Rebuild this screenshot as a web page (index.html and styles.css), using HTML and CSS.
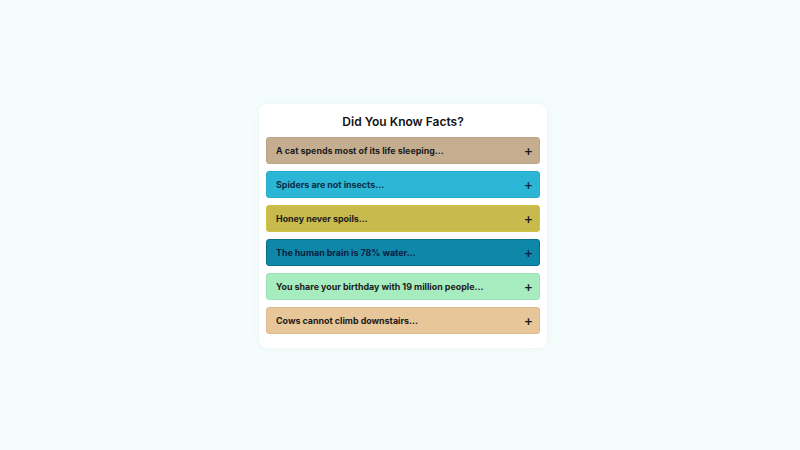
FILE: index.html
```html
<!DOCTYPE html>
<html>
<head>
<meta charset="utf-8">
<link rel="stylesheet" href="styles.css">
</head>
<body>
<main class="page">
  <section class="card">
    <h1 class="title">Did You Know Facts?</h1>
    <div class="list">
      <div class="item c1"><span>A cat spends most of its life sleeping...</span><span class="plus">+</span></div>
      <div class="item c2"><span>Spiders are not insects...</span><span class="plus">+</span></div>
      <div class="item c3"><span>Honey never spoils...</span><span class="plus">+</span></div>
      <div class="item c4"><span>The human brain is 78% water...</span><span class="plus">+</span></div>
      <div class="item c5"><span>You share your birthday with 19 million people...</span><span class="plus">+</span></div>
      <div class="item c6"><span>Cows cannot climb downstairs...</span><span class="plus">+</span></div>
    </div>
  </section>
</main>
</body>
</html>
```
FILE: styles.css
```css
html, body {
  margin: 0;
  padding: 0;
}
body {
  background: #f5fcfc;
  font-family: "Inter", "Open Sans", sans-serif;
  width: 800px;
  height: 450px;
}
.page {
  display: flex;
  justify-content: center;
  padding-top: 104px;
  padding-left: 6px;
}
.card {
  width: 274px;
  background: #ffffff;
  border-radius: 8px;
  padding: 9px 7px 14px 7px;
  box-shadow: 0 0 6px rgba(200, 220, 220, 0.25);
}
.title {
  margin: 0 0 6px 0;
  text-align: center;
  font-size: 12px;
  font-weight: 600;
  color: #111;
  line-height: 18px;
}
.list {
  display: flex;
  flex-direction: column;
  gap: 7px;
}
.item {
  height: 27px;
  box-sizing: border-box;
  border-radius: 3px;
  display: flex;
  align-items: center;
  justify-content: space-between;
  padding: 0 6px 0 9px;
  font-size: 8.9px;
  font-weight: 700;
  color: #1b1b1b;
  border: 1px solid transparent;
}
.plus {
  font-size: 14px;
  font-weight: 500;
  line-height: 1;
}
.c1 { background: #c5ae90; border-color: #bda687; }
.c2 { background: #2ab6d4; border-color: #24acc9; color: #0c2b47; }
.c3 { background: #c8ba4d; border-color: #d0c23e; }
.c4 { background: #0e87a8; border-color: #0a6f8c; color: #0a2140; }
.c5 { background: #a6ecbf; border-color: #9be3b5; }
.c6 { background: #e7c699; border-color: #dcbb8e; }
```
